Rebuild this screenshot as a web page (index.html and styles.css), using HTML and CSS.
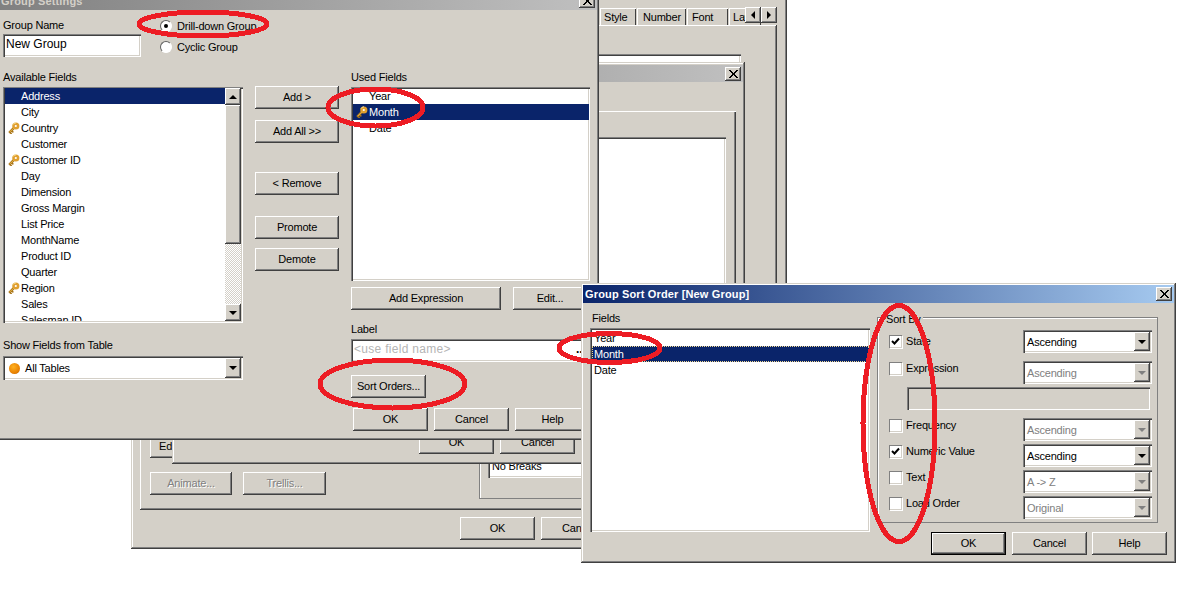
FILE: index.html
```html
<!DOCTYPE html>
<html lang="en">
<head>
<meta charset="utf-8">
<title>Group Settings</title>
<link rel="stylesheet" href="styles.css">
</head>
<body>
<svg class="defs" width="0" height="0" aria-hidden="true">
  <defs>
    <symbol id="key" viewBox="0 0 12 12">
      <path d="M1.2 10.8 5.6 6.2" fill="none" stroke="#a87418" stroke-width="2.4"/>
      <path d="M2.2 10.8 3.8 12M3.8 9 5.4 10.4" fill="none" stroke="#a87418" stroke-width="1.4"/>
      <circle cx="7.8" cy="4" r="3.6" fill="#e0a030"/>
      <circle cx="7.8" cy="4" r="1.1" fill="#fff"/>
      <path d="M5 2.6A3.4 3.4 0 0 1 8 .8" fill="none" stroke="#fbe6a0" stroke-width="1"/>
      <path d="M1.6 10.2 5.4 6.4" fill="none" stroke="#f0c050" stroke-width=".9"/>
    </symbol>
    <symbol id="close" viewBox="0 0 16 14">
      <path d="M4 3l8 8M5 3l8 8M12 3l-8 8M13 3l-8 8" stroke="#000" stroke-width="1" fill="none"/>
    </symbol>
    <symbol id="check" viewBox="0 0 9 9">
      <path d="M1 4l2.5 2.5L8 1.5" fill="none" stroke="#000" stroke-width="2"/>
    </symbol>
  </defs>
</svg>

<section class="window win-back">
  <div class="tabs">
    <span class="tab tab-style">Style</span>
    <span class="tab tab-number">Number</span>
    <span class="tab tab-font">Font</span>
    <span class="tab tab-la">Layout</span>
    <span class="tab-scroll"><span class="btn mini"><i class="arrow left"></i></span><span class="btn mini"><i class="arrow right"></i></span></span>
  </div>
  <div class="pane">
    <div class="pane-box sunken"></div>
    <div class="pane-bottom">
      <div class="pane-left">
        <button class="btn ed">Edit...</button>
        <div class="pane-btns">
          <button class="btn disabled wide-82">Animate...</button>
          <button class="btn disabled wide-83">Trellis...</button>
        </div>
      </div>
      <div class="breaks-group">
        <div class="combo breaks"><span class="combo-text">No Breaks</span></div>
      </div>
    </div>
  </div>
  <div class="back-actions">
    <button class="btn w75">OK</button>
    <button class="btn w75">Cancel</button>
  </div>
</section>

<section class="window win-middle">
  <header class="titlebar inactive"><span class="title-text">Chart Properties</span><span class="btn closebtn"><svg><use href="#close"/></svg></span></header>
  <div class="middle-group">
    <div class="middle-box sunken"></div>
  </div>
  <div class="middle-actions">
    <button class="btn w75">OK</button>
    <button class="btn w75">Cancel</button>
  </div>
</section>

<section class="window win-main">
  <header class="titlebar inactive"><span class="title-text">Group Settings</span><span class="btn closebtn"><svg><use href="#close"/></svg></span></header>
  <div class="main-top">
    <div class="name-col">
      <div class="label">Group Name</div>
      <div class="field name-field sunken">New Group</div>
    </div>
    <div class="radio-col">
      <div class="radio-row"><i class="radio on"></i><span>Drill-down Group</span></div>
      <div class="radio-row"><i class="radio"></i><span>Cyclic Group</span></div>
    </div>
  </div>
  <div class="main-cols">
    <div class="avail-col">
      <div class="label">Available Fields</div>
      <div class="list avail-list sunken">
        <div class="rows">
          <div class="row slot selected">Address</div>
          <div class="row slot">City</div>
          <div class="row slot"><svg class="key"><use href="#key"/></svg>Country</div>
          <div class="row slot">Customer</div>
          <div class="row slot"><svg class="key"><use href="#key"/></svg>Customer ID</div>
          <div class="row slot">Day</div>
          <div class="row slot">Dimension</div>
          <div class="row slot">Gross Margin</div>
          <div class="row slot">List Price</div>
          <div class="row slot">MonthName</div>
          <div class="row slot">Product ID</div>
          <div class="row slot">Quarter</div>
          <div class="row slot"><svg class="key"><use href="#key"/></svg>Region</div>
          <div class="row slot">Sales</div>
          <div class="row slot">Salesman ID</div>
        </div>
        <div class="scrollbar">
          <span class="btn sb-btn"><i class="arrow up"></i></span>
          <span class="btn sb-thumb"></span>
          <span class="sb-track"></span>
          <span class="btn sb-btn"><i class="arrow down"></i></span>
        </div>
      </div>
      <div class="label show-label">Show Fields from Table</div>
      <div class="combo table-combo">
        <i class="dot"></i><span class="combo-text">All Tables</span>
        <span class="btn dropbtn"><i class="arrow down"></i></span>
      </div>
    </div>
    <div class="btn-col">
      <button class="btn add">Add &gt;</button>
      <button class="btn addall">Add All &gt;&gt;</button>
      <button class="btn remove">&lt; Remove</button>
      <button class="btn promote">Promote</button>
      <button class="btn demote">Demote</button>
    </div>
    <div class="used-col">
      <div class="label">Used Fields</div>
      <div class="list used-list sunken">
        <div class="rows">
          <div class="row slot">Year</div>
          <div class="row slot selected"><svg class="key"><use href="#key"/></svg>Month</div>
          <div class="row slot">Date</div>
        </div>
      </div>
      <div class="expr-row">
        <button class="btn expr">Add Expression</button>
        <button class="btn edit">Edit...</button>
      </div>
      <div class="label label-label">Label</div>
      <div class="field label-field sunken"><span class="placeholder">&lt;use field name&gt;</span><span class="dots">...</span></div>
      <button class="btn w75 sort">Sort Orders...</button>
      <div class="main-actions">
        <button class="btn w75">OK</button>
        <button class="btn w75">Cancel</button>
        <button class="btn w75">Help</button>
      </div>
    </div>
  </div>
</section>

<section class="window win-sort">
  <header class="titlebar active"><span class="title-text">Group Sort Order [New Group]</span><span class="btn closebtn"><svg><use href="#close"/></svg></span></header>
  <div class="sort-body">
    <div class="sort-fields">
      <div class="label">Fields</div>
      <div class="list sort-list sunken">
        <div class="rows">
          <div class="row plain">Year</div>
          <div class="row plain selected focus">Month</div>
          <div class="row plain">Date</div>
        </div>
      </div>
    </div>
    <div class="sort-right">
      <div class="sortby">
        <span class="legend">Sort By</span>
        <div class="sort-row first">
          <div class="check-part state"><span class="check"><svg><use href="#check"/></svg></span><span>State</span></div>
          <div class="combo sort-combo"><span class="combo-text">Ascending</span><span class="btn dropbtn"><i class="arrow down"></i></span></div>
        </div>
        <div class="sort-row gap8">
          <div class="check-part"><span class="check"></span><span>Expression</span></div>
          <div class="combo sort-combo off"><span class="combo-text">Ascending</span><span class="btn dropbtn"><i class="arrow down"></i></span></div>
        </div>
        <div class="expr-field sunken"></div>
        <div class="sort-row gap8">
          <div class="check-part"><span class="check"></span><span>Frequency</span></div>
          <div class="combo sort-combo off"><span class="combo-text">Ascending</span><span class="btn dropbtn"><i class="arrow down"></i></span></div>
        </div>
        <div class="sort-row gap3">
          <div class="check-part"><span class="check"><svg><use href="#check"/></svg></span><span>Numeric Value</span></div>
          <div class="combo sort-combo"><span class="combo-text">Ascending</span><span class="btn dropbtn"><i class="arrow down"></i></span></div>
        </div>
        <div class="sort-row gap3">
          <div class="check-part"><span class="check"></span><span>Text</span></div>
          <div class="combo sort-combo off"><span class="combo-text">A -&gt; Z</span><span class="btn dropbtn"><i class="arrow down"></i></span></div>
        </div>
        <div class="sort-row gap3">
          <div class="check-part"><span class="check"></span><span>Load Order</span></div>
          <div class="combo sort-combo off"><span class="combo-text">Original</span><span class="btn dropbtn"><i class="arrow down"></i></span></div>
        </div>
      </div>
      <div class="sort-actions">
        <button class="btn w75 default">OK</button>
        <button class="btn w75">Cancel</button>
        <button class="btn w75">Help</button>
      </div>
    </div>
  </div>
</section>

<svg class="marks" width="1184" height="589" aria-hidden="true">
  <ellipse cx="203" cy="24" rx="64" ry="12"/>
  <ellipse cx="375.5" cy="107.5" rx="47.5" ry="18.5"/>
  <ellipse cx="392.5" cy="384" rx="72.5" ry="24"/>
  <ellipse cx="609.5" cy="348" rx="50.5" ry="14.5"/>
  <ellipse cx="899" cy="423.5" rx="36" ry="118"/>
</svg>
</body>
</html>
```
FILE: styles.css
```css
* { box-sizing: border-box; }
html, body { margin: 0; height: 100%; overflow: hidden; background: #fff; }
body { position: relative; font: 11px/14px "Liberation Sans", Arial, sans-serif; letter-spacing: -0.2px; color: #000; }
.defs { position: absolute; }
.marks { position: absolute; left: 0; top: 0; pointer-events: none; }
.marks ellipse { fill: none; stroke: #ed1c24; stroke-width: 5; shape-rendering: crispEdges; }

.window {
  position: absolute;
  display: flex;
  flex-direction: column;
  padding: 2px;
  background: #d4d0c8;
  box-shadow: inset -1px -1px #404040, inset 1px 1px #d4d0c8, inset -2px -2px #808080, inset 2px 2px #fff;
}
.win-back { left: 131px; top: -20px; width: 656px; height: 569px; }
.win-middle { left: 172px; top: 62px; width: 573px; height: 402px; padding-top: 3px; }
.win-main { left: -3px; top: -10px; width: 602px; height: 450px; }
.win-sort { left: 581px; top: 283px; width: 595px; height: 280px; }

.titlebar { flex: none; display: flex; align-items: center; justify-content: space-between; height: 18px; padding: 0 2px; font-weight: 700; letter-spacing: .15px; color: #fff; }
.titlebar.active { background: linear-gradient(90deg, #0a246a, #a6caf0); }
.titlebar.inactive { background: linear-gradient(90deg, #808080, #c0c0c0); color: #d4d0c8; }
.win-middle .titlebar { height: 17px; }

.btn {
  display: inline-flex;
  align-items: center;
  justify-content: center;
  flex: none;
  height: 23px;
  margin: 0;
  padding: 0 0 1px;
  border: 0;
  background: #d4d0c8;
  font: inherit;
  letter-spacing: inherit;
  color: #000;
  box-shadow: inset -1px -1px #404040, inset 1px 1px #fff, inset -2px -2px #808080;
}
.btn.disabled { color: #808080; text-shadow: 1px 1px #fff; }
.w75 { width: 75px; }
.default { outline: 1px solid #000; outline-offset: -1px; box-shadow: inset -2px -2px #404040, inset 2px 2px #fff, inset -3px -3px #808080; }
.closebtn { width: 16px; height: 14px; padding: 0; }
.closebtn svg { width: 16px; height: 14px; }

.sunken { box-shadow: inset 1px 1px #808080, inset 2px 2px #404040, inset -1px -1px #fff, inset -2px -2px #d4d0c8; }
.label { height: 14px; white-space: nowrap; }
.field { background: #fff; }

.arrow { display: block; width: 0; height: 0; border: 4px solid transparent; }
.arrow.up { border-top: 0; border-bottom-color: #000; }
.arrow.down { border-bottom: 0; border-top-color: #000; }
.arrow.left { border-left: 0; border-right-color: #000; }
.arrow.right { border-right: 0; border-left-color: #000; }

/* Back window */
.tabs { flex: none; display: flex; align-items: flex-end; justify-content: flex-end; height: 26px; padding-right: 8px; margin-top: 17px; position: relative; z-index: 1; overflow: hidden; }
.tab { flex: none; height: 17px; padding: 2px 3px 0 3px; overflow: hidden; white-space: nowrap; box-shadow: inset 1px 1px #fff, inset -1px 0 #404040; }
.tab-style { width: 36px; margin-right: 1px; padding-left: 4px; }
.tab-number { width: 49px; margin-right: 1px; padding-left: 6px; }
.tab-font { width: 41px; margin-right: 1px; padding-left: 5px; }
.tab-la { width: 32px; margin-right: -16px; padding-left: 4px; }
.tab-scroll { display: flex; flex: none; height: 16px; margin-bottom: 2px; position: relative; }
.mini { width: 16px; height: 16px; padding: 0; }
.pane { flex: 1; display: flex; flex-direction: column; margin: 0 8px 0 7px; box-shadow: inset -1px -1px #404040, inset 1px 1px #fff, inset -2px -2px #808080; }
.pane-box { height: 30px; margin: 29px 36px 0 60px; background: #fff; flex: none; }
.pane-bottom { flex: 1; display: flex; justify-content: space-between; align-items: flex-end; padding: 0 10px 11px 10px; }
.pane-left { margin-bottom: 4px; }
.ed { width: 80px; justify-content: flex-start; padding-left: 9px; }
.pane-btns { display: flex; gap: 11px; margin-top: 14px; }
.wide-82 { width: 82px; }
.wide-83 { width: 83px; }
.breaks-group { width: 288px; height: 60px; padding: 15px 9px 0; box-shadow: inset 1px 1px #808080, inset -1px -1px #808080, inset 2px 2px #fff; }
.breaks { width: 260px; }
.back-actions { flex: none; display: flex; gap: 6px; padding: 7px 0 0 327px; height: 37px; }

/* Middle window */
.middle-group { flex: none; height: 310px; margin: 29px 7px 0 8px; display: flex; justify-content: flex-end; padding: 26px 10px 0 0; box-shadow: inset 1px 1px #fff, inset -1px -1px #404040, inset -2px -2px #808080; }
.middle-box { width: 500px; height: 270px; background: #fff; }
.middle-actions { flex: none; display: flex; gap: 6px; margin-top: 10px; padding-left: 245px; }

/* Main window */
.main-top { flex: none; display: flex; padding-left: 4px; height: 47px; }
.name-col { width: 138px; padding-top: 8px; }
.name-field { height: 23px; margin-top: 2px; padding: 3px 3px 0; font-size: 12px; letter-spacing: 0; line-height: 14px; }
.radio-col { margin-left: 19px; padding-top: 5px; }
.radio-row { display: flex; align-items: center; gap: 5px; height: 21px; white-space: nowrap; }
.radio { display: block; position: relative; width: 12px; height: 12px; border-radius: 50%; background: #fff; border: 1px solid; border-color: #606060 #fff #fff #606060; }
.radio.on::after { content: ""; position: absolute; left: 3px; top: 3px; width: 4px; height: 4px; border-radius: 50%; background: #000; }
.main-cols { flex: 1; display: flex; margin-top: 13px; padding-left: 4px; }
.avail-col { width: 240px; }
.list { display: flex; background: #fff; padding: 1px 1px 2px 2px; margin-top: 3px; overflow: hidden; }
.rows { flex: 1; min-width: 0; overflow: hidden; }
.row { position: relative; height: 16px; line-height: 16px; white-space: nowrap; }
.row.slot { padding-left: 16px; }
.row.plain { padding-left: 2px; }
.row.selected { background: #0a246a; color: #fff; }
.row.focus { outline: 1px dotted #f0d890; outline-offset: -1px; }
.key { position: absolute; left: 3px; top: 2px; width: 12px; height: 12px; }
.avail-list { height: 236px; padding-right: 2px; }
.scrollbar { flex: none; width: 16px; display: flex; flex-direction: column; height: 233px; }
.sb-btn { height: 17px; width: 16px; padding: 0; }
.sb-thumb { width: 16px; height: 139px; }
.sb-track { flex: 1; background: repeating-conic-gradient(#fff 0 25%, #d4d0c8 0 50%) 0 0 / 2px 2px; }
.show-label { margin-top: 15px; }
.combo { position: relative; display: flex; align-items: center; height: 24px; background: #fff; box-shadow: inset 1px 1px #808080, inset 2px 2px #404040, inset -1px -1px #fff, inset -2px -2px #d4d0c8; }
.combo-text { padding-left: 4px; white-space: nowrap; }
.table-combo { margin-top: 4px; }
.dot { display: block; width: 11px; height: 11px; margin-left: 6px; border-radius: 50%; background: radial-gradient(circle at 40% 35%, #ffb020, #e88000 65%, #a05000); }
.table-combo .combo-text { padding-left: 5px; }
.dropbtn { position: absolute; right: 2px; top: 2px; width: 16px; height: 20px; padding: 0; }
.btn-col { width: 84px; margin-left: 12px; padding-top: 16px; display: flex; flex-direction: column; }
.btn-col .btn { width: 84px; }
.addall { margin-top: 11px; }
.remove { margin-top: 29px; }
.promote { margin-top: 21px; }
.demote { margin-top: 9px; }
.used-col { width: 239px; margin-left: 12px; }
.used-list { height: 194px; }
.expr-row { display: flex; gap: 12px; margin-top: 6px; }
.expr { width: 150px; }
.edit { width: 74px; }
.label-label { margin-top: 12px; }
.label-field { display: flex; justify-content: space-between; height: 23px; margin-top: 3px; padding: 3px 4px 0 3px; font-size: 12px; letter-spacing: 0; }
.placeholder { color: #b4b4b4; letter-spacing: .3px; }
.dots { font-weight: 700; color: #000; }
.sort { display: flex; margin-top: 13px; }
.main-actions { display: flex; gap: 6px; margin: 10px 0 0 2px; }

/* Sort window */
.sort-body { flex: 1; display: flex; padding-left: 7px; }
.sort-fields { width: 280px; padding-top: 8px; padding-left: 0; }
.sort-fields .label { padding-left: 2px; }
.sort-list { height: 204px; margin-top: 3px; padding-top: 2px; }
.sort-right { width: 281px; margin-left: 7px; padding-top: 14px; }
.sortby { position: relative; height: 206px; padding: 13px 6px 0 0; box-shadow: inset 1px 1px #808080, inset -1px -1px #808080, inset 2px 2px #fff; }
.legend { position: absolute; left: 7px; top: -5px; padding: 0 2px; background: #d4d0c8; }
.sort-row { display: flex; align-items: flex-start; height: 23px; }
.gap8 { margin-top: 8px; }
.gap3 { margin-top: 3px; }
.check-part { display: flex; align-items: center; gap: 4px; width: 146px; padding-left: 12px; white-space: nowrap; }
.check-part.state { margin-top: 4px; }
.check { display: block; width: 13px; height: 13px; padding: 2px; background: #fff; box-shadow: inset 1px 1px #808080, inset -1px -1px #d4d0c8, 1px 1px #fff; }
.check svg { display: block; width: 9px; height: 9px; }
.sort-combo { width: 129px; height: 23px; }
.sort-combo .dropbtn { height: 19px; }
.sort-combo.off .combo-text { color: #808080; }
.sort-combo.off .arrow { border-top-color: #808080; }
.expr-field { width: 243px; height: 23px; margin: 3px 0 0 30px; }
.sort-actions { display: flex; gap: 6px; margin: 9px 0 0 54px; }
.sort-actions .btn:last-child { margin-left: -1px; }
```
